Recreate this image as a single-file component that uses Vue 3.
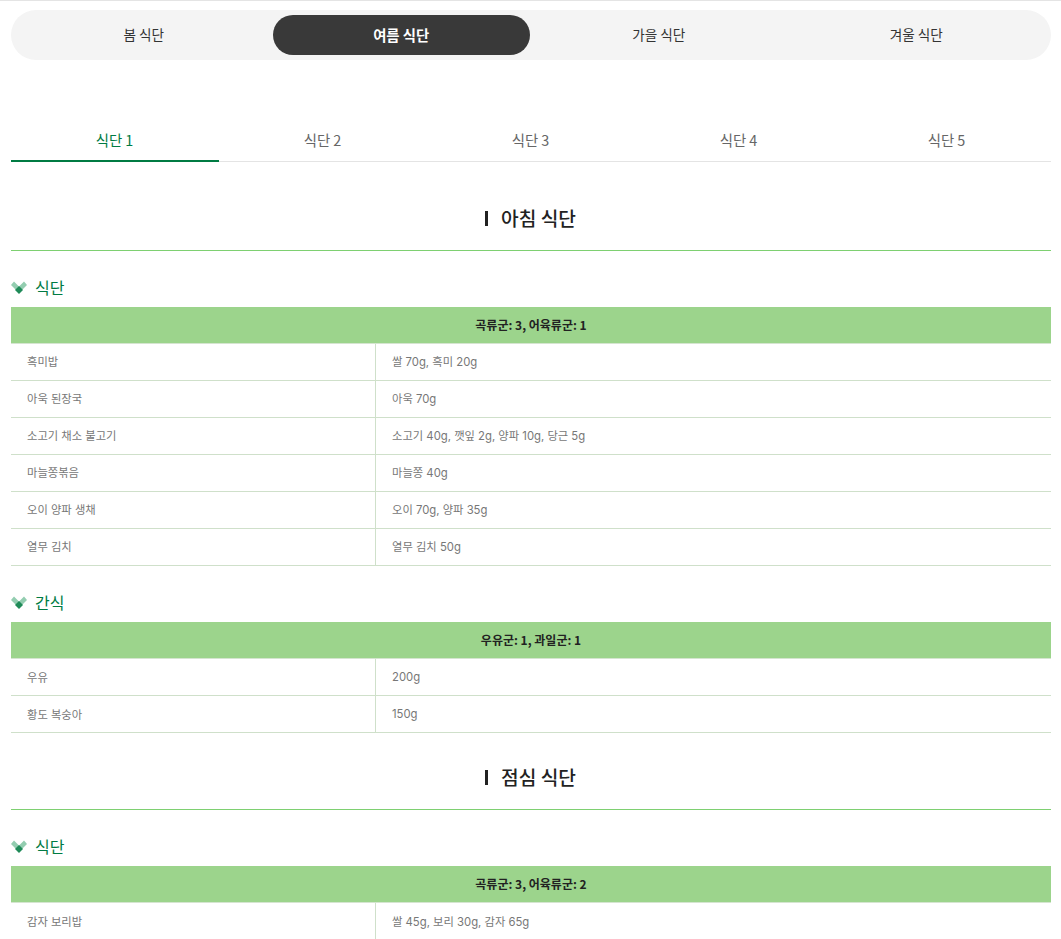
<script setup>
const seasons = ['봄 식단', '여름 식단', '가을 식단', '겨울 식단']
const tabs = ['식단 1', '식단 2', '식단 3', '식단 4', '식단 5']
const meals = [
  {
    title: '아침 식단',
    groups: [
      {
        name: '식단', head: '곡류군: 3, 어육류군: 1',
        rows: [
          ['흑미밥', '쌀 70g, 흑미 20g'],
          ['아욱 된장국', '아욱 70g'],
          ['소고기 채소 불고기', '소고기 40g, 깻잎 2g, 양파 10g, 당근 5g'],
          ['마늘쫑볶음', '마늘쫑 40g'],
          ['오이 양파 생채', '오이 70g, 양파 35g'],
          ['열무 김치', '열무 김치 50g']
        ]
      },
      {
        name: '간식', head: '우유군: 1, 과일군: 1',
        rows: [['우유', '200g'], ['황도 복숭아', '150g']]
      }
    ]
  },
  {
    title: '점심 식단',
    groups: [
      {
        name: '식단', head: '곡류군: 3, 어육류군: 2',
        rows: [['감자 보리밥', '쌀 45g, 보리 30g, 감자 65g']]
      }
    ]
  }
]
</script>

<template>
  <div class="page">
    <nav class="seasons">
      <div v-for="(s, i) in seasons" :key="s" class="season" :class="{ on: i === 1 }">{{ s }}</div>
    </nav>
    <nav class="tabs">
      <div v-for="(t, i) in tabs" :key="t" class="tab" :class="{ on: i === 0 }">{{ t }}</div>
    </nav>
    <section v-for="m in meals" :key="m.title" class="meal">
      <h2 class="meal-title"><span class="bar"></span>{{ m.title }}</h2>
      <div v-for="g in m.groups" :key="g.name" class="group">
        <h3 class="group-title">
          <svg class="mark" width="16" height="13" viewBox="0 0 16 13">
            <path d="M0 4 3 .5 8 5.500 13 .5 16 4 8 12Z" fill="#93cdb0" />
            <path d="M8 5 12 9 8 13 4 9Z" fill="#1f8a58" />
          </svg>
          {{ g.name }}
        </h3>
        <div class="grid">
          <div class="head">{{ g.head }}</div>
          <div v-for="r in g.rows" :key="r[0]" class="row">
            <div class="cell c1">{{ r[0] }}</div>
            <div class="cell">{{ r[1] }}</div>
          </div>
        </div>
      </div>
    </section>
  </div>
</template>

<style>
html, body { margin: 0; background: #fff; overflow: hidden; }
</style>

<style scoped>
.page {
  height: 939px;
  box-sizing: border-box;
  overflow: hidden;
  border-top: 1px solid #e4e4e4;
  padding: 9px 10px 0 11px;
  font-family: "Noto Sans CJK KR", "Noto Sans", sans-serif;
  color: #333;
}
.seasons {
  display: flex;
  height: 50px;
  box-sizing: border-box;
  padding: 5px 6px 5px 4px;
  background: #f4f4f4;
  border-radius: 25px;
}
.season {
  flex: 1;
  display: flex;
  align-items: center;
  justify-content: center;
  padding-bottom: 2px;
  box-sizing: border-box;
  border-radius: 20px;
  font-size: 13.6px;
  color: #333;
}
.season.on {
  background: #393939;
  color: #fff;
  font-size: 14.4px;
  font-weight: 700;
}
.tabs {
  display: flex;
  margin-top: 61px;
  height: 41px;
  box-sizing: border-box;
  border-bottom: 1px solid #e4e4e4;
}
.tab {
  flex: 1;
  display: flex;
  align-items: center;
  justify-content: center;
  height: 41px;
  box-sizing: border-box;
  padding: 0 1px 5px 0;
  font-size: 14.4px;
  color: #666;
}
.tab.on {
  color: #007b43;
  border-bottom: 2px solid #007b43;
  padding-bottom: 3px;
}
.meal:first-of-type {
  padding-top: 12px;
}
.meal-title {
  margin: 0;
  height: 77px;
  box-sizing: border-box;
  display: flex;
  align-items: flex-end;
  justify-content: center;
  padding: 0 1px 18px 0;
  border-bottom: 1px solid #7ed071;
  font-size: 19.2px;
  line-height: 28px;
  font-weight: 500;
  color: #222;
}
.bar {
  width: 3px;
  height: 15px;
  background: #222;
  margin: 0 13px 6px 0;
}
.group-title {
  margin: 0;
  height: 56px;
  box-sizing: border-box;
  display: flex;
  align-items: flex-end;
  padding-bottom: 8px;
  font-size: 16px;
  font-weight: 400;
  line-height: 24px;
  color: #007b43;
}
.mark {
  margin: 0 8px 5px 0;
}
.head {
  height: 37px;
  box-sizing: border-box;
  display: flex;
  align-items: center;
  justify-content: center;
  padding-bottom: 1px;
  background: #9cd48c;
  font-size: 12px;
  font-weight: 700;
  color: #222;
  border-bottom: 1px solid #d5e5d0;
}
.row {
  display: grid;
  grid-template-columns: 365px 1fr;
  height: 37px;
  box-sizing: border-box;
  border-bottom: 1px solid #cfe0ca;
}
.cell {
  display: flex;
  align-items: center;
  padding: 0 16px;
  font-family: Inter, "Noto Sans CJK KR", sans-serif;
  font-size: 11.3px;
  font-weight: 400;
  color: #777;
}
.meal:first-of-type .group:first-of-type .cell {
  padding-bottom: 2px;
}
.c1 {
  border-right: 1px solid #cfe0ca;
}
</style>
